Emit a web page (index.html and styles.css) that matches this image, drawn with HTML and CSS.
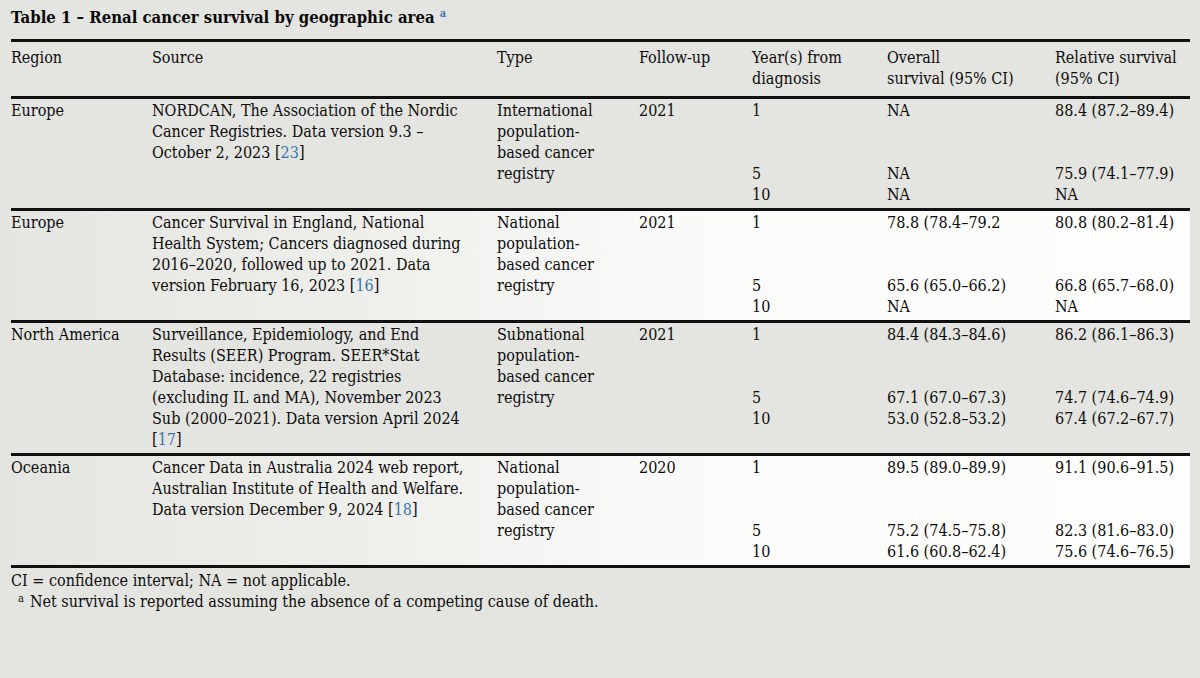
FILE: index.html
```html
<!DOCTYPE html>
<html lang="en">
<head>
<meta charset="utf-8">
<title>Table 1 – Renal cancer survival by geographic area</title>
<link rel="stylesheet" href="styles.css">
</head>
<body>
<div class="page">
  <h1 class="title">Table 1 – Renal cancer survival by geographic area <sup class="fn-ref">a</sup></h1>
  <table class="data">
    <colgroup>
      <col class="c-region">
      <col class="c-source">
      <col class="c-type">
      <col class="c-follow">
      <col class="c-year">
      <col class="c-overall">
      <col class="c-relative">
    </colgroup>
    <thead>
      <tr>
        <th>Region</th>
        <th>Source</th>
        <th>Type</th>
        <th>Follow-up</th>
        <th>Year(s) from<br>diagnosis</th>
        <th>Overall<br>survival (95% CI)</th>
        <th>Relative survival<br>(95% CI)</th>
      </tr>
    </thead>
    <tbody>
      <tr>
        <td>Europe</td>
        <td>NORDCAN, The Association of the Nordic<br>Cancer Registries. Data version 9.3 –<br>October 2, 2023 [<span class="ref">23</span>]</td>
        <td>International<br>population-<br>based cancer<br>registry</td>
        <td>2021</td>
        <td><span class="v first">1</span><span class="v">5</span><span class="v">10</span></td>
        <td><span class="v first">NA</span><span class="v">NA</span><span class="v">NA</span></td>
        <td><span class="v first">88.4 (87.2–89.4)</span><span class="v">75.9 (74.1–77.9)</span><span class="v">NA</span></td>
      </tr>
      <tr class="lit">
        <td>Europe</td>
        <td>Cancer Survival in England, National<br>Health System; Cancers diagnosed during<br>2016–2020, followed up to 2021. Data<br>version February 16, 2023 [<span class="ref">16</span>]</td>
        <td>National<br>population-<br>based cancer<br>registry</td>
        <td>2021</td>
        <td><span class="v first">1</span><span class="v">5</span><span class="v">10</span></td>
        <td><span class="v first">78.8 (78.4–79.2</span><span class="v">65.6 (65.0–66.2)</span><span class="v">NA</span></td>
        <td><span class="v first">80.8 (80.2–81.4)</span><span class="v">66.8 (65.7–68.0)</span><span class="v">NA</span></td>
      </tr>
      <tr>
        <td>North America</td>
        <td>Surveillance, Epidemiology, and End<br>Results (SEER) Program. SEER*Stat<br>Database: incidence, 22 registries<br>(excluding IL and MA), November 2023<br>Sub (2000–2021). Data version April 2024<br>[<span class="ref">17</span>]</td>
        <td>Subnational<br>population-<br>based cancer<br>registry</td>
        <td>2021</td>
        <td><span class="v first">1</span><span class="v">5</span><span class="v">10</span></td>
        <td><span class="v first">84.4 (84.3–84.6)</span><span class="v">67.1 (67.0–67.3)</span><span class="v">53.0 (52.8–53.2)</span></td>
        <td><span class="v first">86.2 (86.1–86.3)</span><span class="v">74.7 (74.6–74.9)</span><span class="v">67.4 (67.2–67.7)</span></td>
      </tr>
      <tr class="lit">
        <td>Oceania</td>
        <td>Cancer Data in Australia 2024 web report,<br>Australian Institute of Health and Welfare.<br>Data version December 9, 2024 [<span class="ref">18</span>]</td>
        <td>National<br>population-<br>based cancer<br>registry</td>
        <td>2020</td>
        <td><span class="v first">1</span><span class="v">5</span><span class="v">10</span></td>
        <td><span class="v first">89.5 (89.0–89.9)</span><span class="v">75.2 (74.5–75.8)</span><span class="v">61.6 (60.8–62.4)</span></td>
        <td><span class="v first">91.1 (90.6–91.5)</span><span class="v">82.3 (81.6–83.0)</span><span class="v">75.6 (74.6–76.5)</span></td>
      </tr>
    </tbody>
  </table>
  <div class="notes">
    <p class="note">CI = confidence interval; NA = not applicable.</p>
    <p class="note note-a"><sup class="mark">a</sup>Net survival is reported assuming the absence of a competing cause of death.</p>
  </div>
</div>
</body>
</html>
```

FILE: styles.css
```css
html, body {
  margin: 0;
  padding: 0;
  background: #e4e4e0;
}

body {
  font-family: "DejaVu Serif Condensed", "DejaVu Serif", "Liberation Serif", serif;
  font-size: 16px;
  line-height: 21px;
  color: #0d0d0d;
}

.page {
  padding: 7px 10px 0 11px;
}

.title {
  margin: 0 0 11px;
  font-size: 16.6px;
  line-height: 21px;
  font-weight: bold;
  color: #0a0a0a;
}

.fn-ref {
  font-size: 11px;
  line-height: 0;
  color: #3a76ad;
  vertical-align: 6px;
  font-weight: bold;
}

.data {
  width: 1179px;
  border-collapse: collapse;
  table-layout: fixed;
  border-top: 3px solid #111;
}

.c-region { width: 141px; }
.c-source { width: 345px; }
.c-type { width: 142px; }
.c-follow { width: 113px; }
.c-year { width: 135px; }
.c-overall { width: 168px; }
.c-relative { width: 135px; }

.data th {
  font-weight: normal;
  text-align: left;
  vertical-align: top;
  padding: 5px 0 7px;
  border-bottom: 3px solid #111;
  white-space: nowrap;
}

.data td {
  vertical-align: top;
  text-align: left;
  padding: 1px 0 3px;
  border-bottom: 3px solid #111;
  white-space: nowrap;
}

.data tr.lit {
  background: linear-gradient(to right, #e5e5e1 0%, #eeeeeb 30%, #fafaf8 55%, #fdfdfc 100%);
}

.v {
  display: block;
}

.v.first {
  margin-bottom: 42px;
}

.ref {
  color: #3a76ad;
}

.notes {
  padding-top: 2px;
}

.note {
  margin: 0;
  line-height: 21px;
}

.note-a {
  padding-left: 7px;
}

.mark {
  font-size: 11px;
  line-height: 0;
  vertical-align: 5px;
  margin-right: 6px;
}
```
